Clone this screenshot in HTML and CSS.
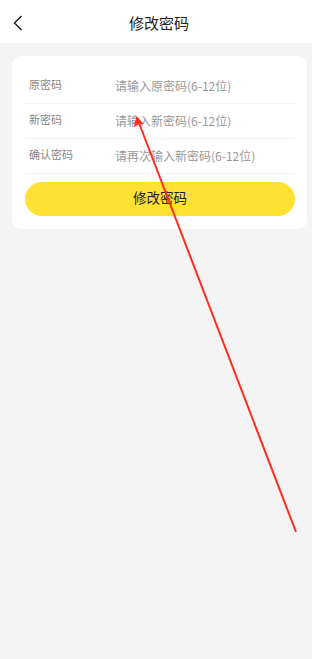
FILE: index.html
```html
<!DOCTYPE html>
<html lang="zh">
<head>
<meta charset="utf-8">
<link rel="stylesheet" href="styles.css">
</head>
<body>
<div class="page">
  <header class="topbar">
    <svg class="back" width="10" height="16" viewBox="0 0 10 16"><path d="M8.5 1 L1.5 8 L8.5 15" fill="none" stroke="#222" stroke-width="1.5"/></svg>
    <div class="title">修改密码</div>
  </header>
  <main class="content">
    <section class="card">
      <div class="row"><span class="label">原密码</span><span class="ph">请输入原密码(6-12位)</span></div>
      <div class="row"><span class="label">新密码</span><span class="ph">请输入新密码(6-12位)</span></div>
      <div class="row"><span class="label">确认密码</span><span class="ph">请再次输入新密码(6-12位)</span></div>
      <button class="submit">修改密码</button>
    </section>
  </main>
  <svg class="annot" width="312" height="659" viewBox="0 0 312 659">
    <line x1="296" y1="532" x2="139" y2="123" stroke="#ff2d1e" stroke-width="2"/>
    <polygon points="136.5,116 134,127 139,124 143.5,124" fill="#ff2d1e"/>
  </svg>
</div>
</body>
</html>
```
FILE: styles.css
```css
html, body { margin: 0; padding: 0; }
body {
  background: #f4f4f4;
  font-family: "Noto Sans CJK SC", "Noto Sans", sans-serif;
}
.page { position: relative; width: 312px; height: 659px; overflow: hidden; }
.topbar {
  height: 43px;
  background: #fff;
  display: flex;
  align-items: center;
  justify-content: center;
  position: relative;
}
.back { position: absolute; left: 13px; top: 15px; }
.title { font-size: 15px; color: #222; line-height: 1; margin-top: 1px; margin-left: 6px; }
.content { padding: 13px 5px 0 12px; }
.card {
  background: #fff;
  border-radius: 9px;
  padding: 13px 12px 13px 13px;
  display: flex;
  flex-direction: column;
}
.row {
  height: 34px;
  border-bottom: 1px solid #f2f2f2;
  display: flex;
  align-items: center;
  padding-left: 4px;
}
.label { width: 86px; font-size: 11px; color: #888; position: relative; top: -2px; }
.ph { font-size: 12px; color: #999; position: relative; top: -1px; }
.submit {
  margin-top: 8px;
  height: 34px;
  border: none;
  border-radius: 17px;
  background: #ffe133;
  font-family: inherit;
  font-size: 13.5px;
  line-height: 1;
  color: #222;
  padding: 0 0 3px 0;
}
.annot { position: absolute; left: 0; top: 0; pointer-events: none; }
```
